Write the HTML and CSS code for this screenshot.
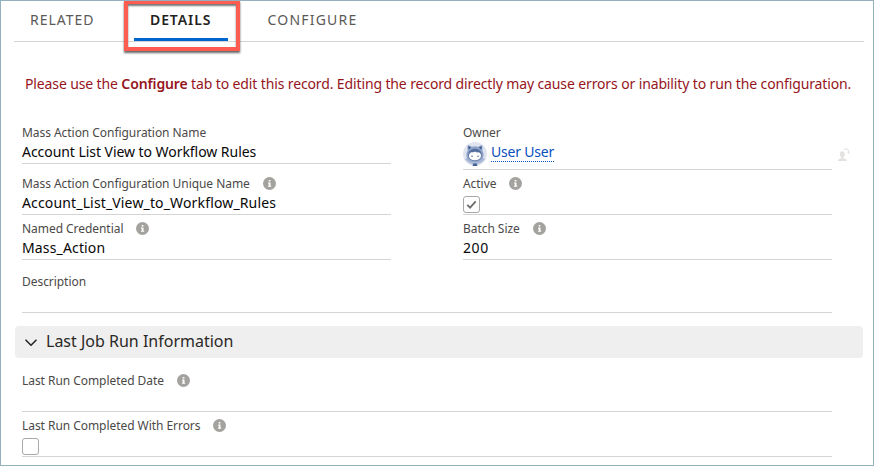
FILE: index.html
```html
<!DOCTYPE html>
<html lang="en">
<head>
<meta charset="utf-8">
<title>Mass Action Configuration</title>
<link rel="stylesheet" href="styles.css">
</head>
<body>
<svg width="0" height="0" class="defs" aria-hidden="true">
  <symbol id="info" viewBox="0 0 13 13"><circle cx="6.5" cy="6.5" r="6.5" fill="#a4a29f"/><path d="M5.7 2.9h1.7v1.6H5.7zM5 5.4h2.5v3.3h.7v1.1H4.9V8.7h.8V6.5H5z" fill="#fff"/></symbol>
</svg>
<main class="record">
  <nav class="tabs">
    <a class="tab tab-related"><span>RELATED</span></a>
    <a class="tab tab-details active"><span>DETAILS</span></a>
    <a class="tab tab-configure"><span>CONFIGURE</span></a>
    <div class="highlight"></div>
  </nav>
  <p class="warning"><span>Please use the <b>Configure</b> tab to edit this record. Editing the record directly may cause errors or inability to run the configuration.</span></p>
  <section class="columns">
    <div class="column">
      <div class="field name"><div class="label"><span>Mass Action Configuration Name</span></div><div class="value"><span>Account List View to Workflow Rules</span></div></div>
      <div class="field"><div class="label"><span>Mass Action Configuration Unique Name</span><svg class="info"><use href="#info"/></svg></div><div class="value api"><span>Account_List_View_to_Workflow_Rules</span></div></div>
      <div class="field"><div class="label"><span>Named Credential</span><svg class="info"><use href="#info"/></svg></div><div class="value api"><span>Mass_Action</span></div></div>
    </div>
    <div class="column">
      <div class="field owner">
        <div class="label"><span>Owner</span></div>
        <div class="person">
          <svg class="avatar" viewBox="0 0 24 24"><circle cx="12" cy="12" r="12" fill="#dfe4ee"/><path d="M2 17c4-3 16-3 20 0a12 12 0 0 1-20 0z" fill="#a9b9d6"/><path d="M4.600 4.200c0-1 .8-1.200 1.600-.8L9 4.700c2-.7 4-.7 6 0l2.800-1.300c.8-.4 1.600-.2 1.600.8v4.500c2 3.300 1.500 7.500-1.600 9.500-3.400 2-8.200 2-11.600 0-3.100-2-3.600-6.200-1.600-9.500z" fill="#8fa3c8"/><path d="M5.200 4l2.800 1.500-2.300 2.200zM18.800 4L16 5.500l2.300 2.200z" fill="#3d5a91"/><path d="M5.300 13c0-4 3.300-6.200 6.700-6.200s6.700 2.200 6.700 6.200-3.300 5.900-6.700 5.900S5.300 17 5.300 13z" fill="#536e9f"/><path d="M6 14.200c-.3-2 1-3.600 2.400-4 1.300.5 2.400-.2 3.600-.8 1 .8 2.200 1.200 3.800.9 1.600.8 2.400 2.200 2.200 3.900-.4 2.800-3 4.100-6 4.100S6.300 16.900 6 14.200z" fill="#fff"/><circle cx="9" cy="14.300" r=".8" fill="#536e9f"/><circle cx="15" cy="14.300" r=".8" fill="#536e9f"/><path d="M10.300 21.500h3.400l.8 2.200a12 12 0 0 1-5 0z" fill="#435f94"/></svg>
          <a class="link">User User</a>
        </div>
        <svg class="change-owner" viewBox="0 0 12 14"><g fill="#e3e2e0"><ellipse cx="4.300" cy="6.200" rx="2.400" ry="3"/><path d="M3.200 8h2.200v2l2.500 1.200c.7.400.9.800.9 1.800H0c0-1 .2-1.400.9-1.800L3.200 10z"/><path d="M7.500 0v1C9 1 10 2 10.200 3.800H9L10.600 6 12 3.800h-.8C11 1.500 9.500 0 7.500 0zM5.700 1.200L8 0v2.600z"/></g></svg>
      </div>
      <div class="field"><div class="label"><span>Active</span><svg class="info"><use href="#info"/></svg></div><div class="checkbox"><svg viewBox="0 0 15 15"><path d="M3.300 7.800l2.800 2.800 5.600-6.200" fill="none" stroke="#706e6b" stroke-width="1.800"/></svg></div></div>
      <div class="field"><div class="label"><span>Batch Size</span><svg class="info"><use href="#info"/></svg></div><div class="value number"><span>200</span></div></div>
    </div>
  </section>
  <div class="field wide description"><div class="label"><span>Description</span></div></div>
  <h3 class="section"><svg viewBox="0 0 12 8"><path d="M1 1.200l5 5 5-5" fill="none" stroke="#2b2826" stroke-width="1.600" stroke-linecap="round" stroke-linejoin="round"/></svg><span>Last Job Run Information</span></h3>
  <div class="field wide job-date"><div class="label"><span>Last Run Completed Date</span><svg class="info"><use href="#info"/></svg></div></div>
  <div class="field wide"><div class="label"><span>Last Run Completed With Errors</span><svg class="info"><use href="#info"/></svg></div><div class="checkbox"></div></div>
</main>
</body>
</html>
```
FILE: styles.css
```css
* { box-sizing: border-box; }
body { margin: 0; font-family: "Noto Sans", sans-serif; color: #080707; background: #fff; }
.defs { position: absolute; }
.record { width: 874px; height: 466px; border: 1px solid #93b1be; overflow: hidden; background: #fff; }
.tabs { position: relative; display: flex; height: 41px; margin: 0 9px 0 13px; border-bottom: 1px solid #d4d4d4; }
.tab { display: flex; height: 40px; padding-top: 9px; font-size: 14px; line-height: 20px; letter-spacing: 1px; color: #5b5956; white-space: nowrap; }
.tab-related { width: 120px; padding-left: 16px; }
.tab-details { width: 94px; padding-left: 16px; border-bottom: 3px solid #0066cf; color: #242220; font-weight: 600; letter-spacing: .9px; }
.tab-configure { padding-left: 39.5px; letter-spacing: 1.2px; }
.highlight { position: absolute; left: 110px; top: -1px; width: 116px; height: 51px; border: 4px solid #fd5d50; box-shadow: 0 2px 2px #666, inset 0 2px 2px #777; }
.warning { margin: 31px 0 0 24px; height: 22px; font-size: 14px; line-height: 22px; letter-spacing: -.125px; color: #96151c; white-space: nowrap; }
.warning b { font-weight: 600; }
.columns { display: flex; gap: 72px; margin: 24px 0 0 21px; }
.column { width: 369px; }
.field { position: relative; height: 45px; padding-top: 5px; border-bottom: 1px solid #d4d4d4; white-space: nowrap; }
.label { display: flex; align-items: center; gap: 13px; height: 18px; font-size: 12px; line-height: 18px; letter-spacing: -.05px; color: #4b4947; }
.info { width: 13px; height: 13px; margin-bottom: 1px; }
.value { height: 20px; font-size: 14px; line-height: 20px; letter-spacing: -.05px; }
.value.api { letter-spacing: .15px; }
.value.number { letter-spacing: .6px; }
.name { margin-bottom: 6px; }
.owner { height: 51px; }
.person { display: flex; gap: 4px; }
.avatar { width: 24px; height: 24px; }
.link { height: 20px; font-size: 14px; line-height: 20px; letter-spacing: -.2px; color: #0b50bd; border-bottom: 1px dotted #0b50bd; }
.change-owner { position: absolute; left: 375px; top: 29px; width: 12px; height: 14px; }
.checkbox { width: 17px; height: 17px; margin-top: 3px; border: 1px solid #aaa8a5; border-radius: 3px; }
.checkbox svg { display: block; width: 15px; height: 15px; }
.wide { width: 810px; margin-left: 21px; }
.description { margin-top: 8px; }
.section { display: flex; align-items: center; gap: 9px; width: 848px; height: 32px; margin: 13px 0 0 14px; padding: 0 0 2px 10px; border-radius: 4px; background: #efefef; color: #2b2826; font-size: 16px; line-height: 24px; font-weight: 400; }
.section svg { width: 12px; height: 8px; margin-top: 3px; }
.job-date { margin-top: 9px; }
```
